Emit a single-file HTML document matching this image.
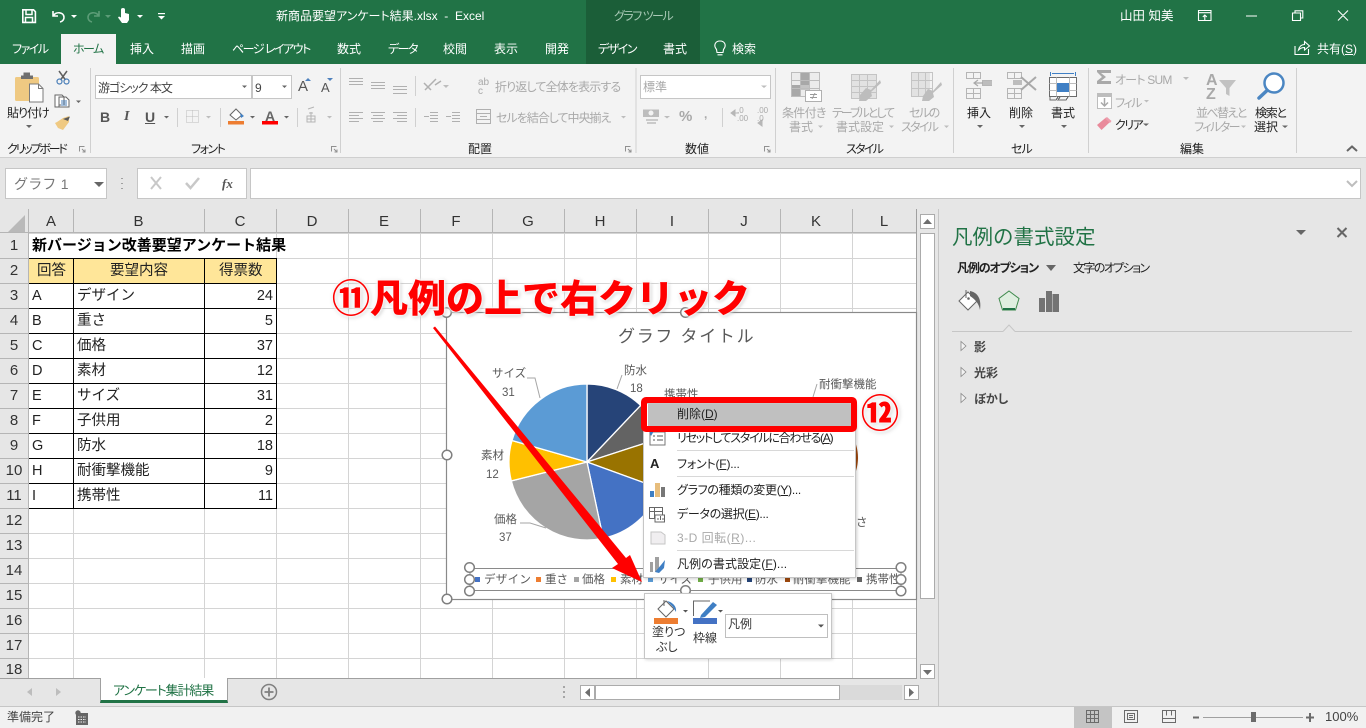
<!DOCTYPE html>
<html lang="ja"><head><meta charset="utf-8"><title>Excel</title>
<style>
html,body{margin:0;padding:0}
body{width:1366px;height:728px;overflow:hidden;position:relative;background:#fff;font-family:"Liberation Sans","Noto Sans CJK JP",sans-serif;color:#333}
.b{position:absolute;box-sizing:border-box}
.t{position:absolute;white-space:nowrap;line-height:16px;font-size:12px;font-feature-settings:"palt";color:#333;margin-top:1px}
.w{color:#fff}.g{color:#a9a9a9}.k{color:#222}
.n{letter-spacing:-1.5px}
.c{position:absolute;white-space:nowrap;line-height:20px;font-size:14.5px;color:#222;margin-top:1px}
.r{text-align:right;width:60px}
.h{position:absolute;white-space:nowrap;line-height:20px;font-size:15px;color:#333;text-align:center;margin-top:1px}
.l{position:absolute;white-space:nowrap;line-height:16px;font-size:11.5px;color:#595959;margin-top:1px}
svg{position:absolute;left:0;top:0}
</style></head><body>
<!-- backgrounds -->
<div class="b" style="left:0;top:0;width:1366px;height:64px;background:#217346"></div>
<div class="b" style="left:586px;top:0;width:114px;height:64px;background:#1b5e38"></div>
<div class="b" style="left:61px;top:34px;width:55px;height:30px;background:#f3f3f3"></div>
<div class="b" style="left:0;top:64px;width:1366px;height:94px;background:#f3f3f3;border-bottom:1px solid #cfcfcf"></div>
<div class="b" style="left:0;top:158px;width:1366px;height:51px;background:#e6e6e6"></div>
<div class="b" style="left:5px;top:168px;width:102px;height:31px;background:#fff;border:1px solid #c6c6c6"></div>
<div class="b" style="left:137px;top:168px;width:110px;height:31px;background:#fff;border:1px solid #c6c6c6"></div>
<div class="b" style="left:250px;top:168px;width:1111px;height:31px;background:#fff;border:1px solid #c6c6c6"></div>
<div class="b" style="left:0;top:209px;width:917px;height:24px;background:#e6e6e6"></div>
<div class="b" style="left:0;top:233px;width:28px;height:445px;background:#e6e6e6"></div>
<div class="b" style="left:917px;top:209px;width:449px;height:497px;background:#e6e6e6"></div>
<div class="b" style="left:0;top:678px;width:917px;height:28px;background:#e6e6e6"></div>
<div class="b" style="left:0;top:706px;width:1366px;height:22px;background:#f1f1f1;border-top:1px solid #c6c6c6"></div>
<div class="b" style="left:29px;top:258px;width:247px;height:25px;background:#ffe699"></div>
<div class="b" style="left:1074px;top:707px;width:38px;height:21px;background:#c4c4c4"></div>
<div class="b" style="left:95px;top:75px;width:157px;height:24px;background:#fff;border:1px solid #c6c6c6"></div>
<div class="b" style="left:252px;top:75px;width:40px;height:24px;background:#fff;border:1px solid #c6c6c6"></div>
<div class="b" style="left:640px;top:75px;width:131px;height:24px;background:#fff;border:1px solid #c6c6c6"></div>
<!-- scrollbars -->
<div class="b" style="left:920px;top:214px;width:15px;height:15px;background:#fff;border:1px solid #ababab"></div>
<div class="b" style="left:920px;top:233px;width:15px;height:366px;background:#fff;border:1px solid #ababab"></div>
<div class="b" style="left:920px;top:664px;width:15px;height:15px;background:#fff;border:1px solid #ababab"></div>
<div class="b" style="left:595px;top:685px;width:307px;height:15px;background:#dadada"></div>
<div class="b" style="left:580px;top:685px;width:15px;height:15px;background:#fff;border:1px solid #ababab"></div>
<div class="b" style="left:595px;top:685px;width:245px;height:15px;background:#fff;border:1px solid #ababab"></div>
<div class="b" style="left:904px;top:685px;width:15px;height:15px;background:#fff;border:1px solid #ababab"></div>
<div class="b" style="left:100px;top:678px;width:128px;height:25px;background:#fff;border:1px solid #a0a0a0;border-top:0;border-bottom:3px solid #217346"></div>

<svg width="1366" height="728" viewBox="0 0 1366 728" shape-rendering="auto">
<!-- grid -->
<g shape-rendering="crispEdges" fill="none">
<path stroke="#d4d4d4" d="M276.5 233V678M348.5 209V678M420.5 233V678M492.5 233V678M564.5 233V678M636.5 233V678M708.5 233V678M780.5 233V678M852.5 233V678M916.5 233V678M73.5 508V678M204.5 508V678M29 258.5H73M29 533.5H916M29 558.5H916M29 583.5H916M29 608.5H916M29 633.5H916M29 658.5H916M276 258.5H916M276 283.5H916M276 308.5H916M276 333.5H916M276 358.5H916M276 383.5H916M276 408.5H916M276 433.5H916M276 458.5H916M276 483.5H916M276 508.5H916M29 233.5H916"/>
<path stroke="#000" d="M28.5 258V508M73.5 258V508M204.5 258V508M276.5 258V508M29 258.5H277M29 283.5H277M29 308.5H277M29 333.5H277M29 358.5H277M29 383.5H277M29 408.5H277M29 433.5H277M29 458.5H277M29 483.5H277M29 508.5H277"/>
<path stroke="#b5b5b5" d="M28.5 209V678M73.5 209V233M204.5 209V233M276.5 209V233M348.5 209V233M420.5 209V233M492.5 209V233M564.5 209V233M636.5 209V233M708.5 209V233M780.5 209V233M852.5 209V233M0 232.5H917M0 258.5H28M0 283.5H28M0 308.5H28M0 333.5H28M0 358.5H28M0 383.5H28M0 408.5H28M0 433.5H28M0 458.5H28M0 483.5H28M0 508.5H28M0 533.5H28M0 558.5H28M0 583.5H28M0 608.5H28M0 633.5H28M0 658.5H28"/>
<path stroke="#a0a0a0" d="M0 678.5H100M228 678.5H917M916.5 209V679"/>
<path stroke="#c6c6c6" d="M938.5 209V706"/>
<path stroke="#d0d0d0" d="M90.5 68V153M340.5 68V153M636 68V153M775.5 68V153M953.5 68V153M1088.5 68V153M1296.5 68V153M177.5 108V127M220.5 108V127M297.5 108V127M415.5 76V96M415.5 108V127M722.5 108V127"/>
</g>
<path d="M8 232L25 215V232Z" fill="#b9b9b9"/>
<!-- title-bar icons -->
<g fill="none" stroke="#fff" stroke-width="1.6">
<path d="M22.8 9.8H33.5L35.4 11.7V22.4H22.8Z"/><path d="M26 10V14.5H32V10M25.5 22V17.5H32.5V22" stroke-width="1.5"/>
<path d="M53 11V16H58M53.5 15.5C56 11.5 63.5 11.8 64 17C64.2 19.5 62.5 21.5 60 22"/>
<path d="M99 11V16H94M98.5 15.5C96 11.5 88.5 11.8 88 17C87.8 19.5 89.5 21.5 92 22" stroke="#5c9c77"/>
</g>
<path d="M121 9.5C121 7.5 125 7.5 125 9.5V13L129 14V20L127 23H122L118 17.5L119 16.5L121 17.5Z" fill="#fff"/>
<g fill="#fff"><path d="M71 15H77L74 18Z"/><path d="M105 15H111L108 18Z" fill="#5c9c77"/><path d="M137 15H143L140 18Z"/><path d="M158 16H165L161.5 19.5Z"/><rect x="158" y="13" width="7" height="1.2"/></g>
<g fill="none" stroke="#fff" stroke-width="1.1">
<path d="M1198.5 10.5H1211V20.5H1198.5ZM1198.5 12.7H1211M1204.8 20V15M1202.8 17L1204.8 15L1206.8 17"/>
<path d="M1246 16H1257M1292.5 13H1300.5V20.5H1292.5ZM1295 13V10.8H1302.8V18H1300.5M1338 10.5L1348 20.5M1348 10.5L1338 20.5"/>
<path d="M716.5 49.5C713 45 715.5 41 720 41C724.5 41 727 45 723.5 49.5L723 52.5H717ZM717.5 54.8H722.5"/>
<path d="M1295 46V54.5H1308.5V49M1298.5 50C1299.5 46 1302 44.5 1304.5 44.5V41.5L1309.5 46L1304.5 50V47.5C1302 47.5 1300 48.5 1298.5 50Z"/>
</g>
<!-- clipboard -->
<rect x="15" y="77" width="24" height="24" rx="1.5" fill="#efc982"/>
<path d="M21 75.5H23.5V72.5H30V75.5H33V79H21Z" fill="#6f6f6f"/>
<path d="M29.5 84H38.5L43 88.5V102H29.5Z" fill="#fff" stroke="#7b7b7b"/>
<path d="M38.5 84V88.5H43" fill="none" stroke="#7b7b7b"/>
<g fill="none" stroke="#5f5f5f" stroke-width="1.5"><path d="M59 71L65.5 80M67 71L60.5 80"/></g>
<circle cx="59.5" cy="81.5" r="2.5" fill="none" stroke="#4b7fb8" stroke-width="1.2"/><circle cx="66.5" cy="81.5" r="2.5" fill="none" stroke="#4b7fb8" stroke-width="1.2"/>
<path d="M55 95H62L64 97V105H59V107H55ZM59 97H66L69 100V107H59Z" fill="#fff" stroke="#666"/>
<path d="M61 101H67M61 103H67M61 105H67" stroke="#4b7fb8"/>
<path d="M57 122L63 118L69 116V122L63 130L58 128L55 123Z" fill="#efc982"/><path d="M63 119L70 116.5L68 121" fill="#5a5a5a"/>
<!-- small down arrows -->
<g fill="#666">
<path d="M26 125H32L29 128Z"/><path d="M76 100.5H81L78.5 103Z"/><path d="M242 85.5H247L244.5 88Z"/><path d="M282 85.5H287L284.5 88Z"/><path d="M164 116H169L166.5 118.5Z"/><path d="M250 116H255L252.5 118.5Z"/><path d="M284 116H289L286.5 118.5Z"/>
<path d="M977 125H983L980 128Z"/><path d="M1019 125H1025L1022 128Z"/><path d="M1061 125H1067L1064 128Z"/><path d="M1143 123.5H1149L1146 126Z"/><path d="M1282 125.5H1288L1285 128Z"/>
<path d="M94 182H104L99 187Z"/><path d="M1296 230H1306L1301 235Z"/><path d="M1046 265H1056L1051 271Z"/>
</g>
<g fill="#bdbdbd"><path d="M206 116H211L208.5 118.5Z"/><path d="M327 116H332L329.5 118.5Z"/><path d="M443 85H449L446 88Z"/><path d="M621 116H626L623.5 118.5Z"/><path d="M761 85.5H767L764 88Z"/><path d="M664 116H670L667 118.5Z"/><path d="M1183 77H1189L1186 80Z"/><path d="M1144 100H1149L1146.5 102.5Z"/><path d="M1241 125.5H1246L1243.5 128Z"/><path d="M944 125.5H949L946.5 128Z"/><path d="M818 125.5H823L820.5 128Z"/><path d="M889 125.5H894L891.5 128Z"/><path d="M1347 181L1352 186L1357 181" fill="none" stroke="#bdbdbd" stroke-width="2"/></g>
<!-- font-row icons -->
<rect x="228" y="121" width="16" height="3.5" fill="#ed7d31"/><rect x="262" y="121" width="16" height="3.5" fill="#f00"/>
<path d="M230 115L236 109L242 115L236 120Z" fill="#fff" stroke="#666"/><path d="M240 113L244 116L241 118Z" fill="#3f7fc4"/>
<path d="M186.5 110.5H198.5V122.5H186.5ZM192.5 110.5V122.5M186.5 116.5H198.5" fill="none" stroke="#bdbdbd" stroke-dasharray="1 1"/>
<path d="M308 109L314 107M309 113H313M307 116H315V122H307ZM311 112V122M307 119H315" fill="none" stroke="#b5b5b5"/>
<path d="M305 81L308 78L311 81Z" fill="#4f81bd"/><path d="M327 78L330 81L333 78Z" fill="#4f81bd"/>
<!-- alignment -->
<path shape-rendering="crispEdges" fill="none" stroke="#b0b0b0" d="M349 78.5H363M349 81.5H363M349 84.5H363M371 82.5H385M371 85.5H385M371 88.5H385M393 86.5H407M393 89.5H407M393 93.5H407M349 112.5H363M349 115.5H359M349 118.5H363M349 121.5H359M371 112.5H385M373 115.5H383M371 118.5H385M373 121.5H383M393 112.5H407M397 115.5H407M393 118.5H407M397 121.5H407M430 112.5H438M430 115.5H438M430 118.5H438M430 121.5H438M424 116.5H429M452 112.5H460M452 115.5H460M452 118.5H460M452 121.5H460M446 116.5H451M476.5 109.5H490.5V123.5H476.5ZM476.5 113.5H490.5M476.5 119.5H490.5M480 116.5H487"/>
<path d="M425 90L436 79M424 83L431 90M435 85L441 81" fill="none" stroke="#b0b0b0" stroke-width="1.5"/>
<text x="478" y="85" font-size="10" fill="#a9a9a9" font-family="Liberation Sans">ab</text><text x="478" y="94" font-size="10" fill="#a9a9a9" font-family="Liberation Sans">c</text>
<path d="M643 109.5H659V117H643Z" fill="#bdbdbd"/><circle cx="651" cy="113" r="2.5" fill="#f3f3f3"/><path d="M646 120H658M647 123H656" stroke="#bdbdbd" stroke-width="1.5"/>
<path d="M731 113L735 110V116ZM735 113H739M758 123L762 120V126Z" fill="#b0b0b0" stroke="#b0b0b0" opacity=".9"/>
<!-- styles icons -->
<g shape-rendering="crispEdges">
<path fill="#ececec" d="M792 73H819V96H792Z"/><path fill="#a8a8a8" d="M800 73H810V85H800ZM792 85H800V97H792Z"/><path fill="#c4c4c4" d="M800 85H810V90H800Z"/>
<path fill="none" stroke="#bdbdbd" d="M791.5 72.5H819.5V96.5H791.5ZM800.5 72.5V96.5M809.5 72.5V96.5M791.5 80.5H819.5M791.5 88.5H819.5"/>
<path fill="#fff" stroke="#b0b0b0" d="M805.5 90.5H821.5V101.5H805.5Z"/>
<path fill="none" stroke="#9a9a9a" d="M810 94.5H817M810 97.5H817M815 93L812 99"/>
<path fill="#e2e2e2" d="M851 75H876V98H851Z"/><path fill="none" stroke="#c4c4c4" d="M851.5 74.5H876.5V98.5H851.5ZM851.5 80.5H876.5M851.5 86.5H876.5M851.5 92.5H876.5M859.5 74.5V98.5M867.5 74.5V98.5"/>
<path fill="#e2e2e2" d="M911 73H930V96H911Z"/><path fill="none" stroke="#c4c4c4" d="M911.5 72.5H932.5V96.5H911.5ZM911.5 80.5H932.5M911.5 88.5H932.5M918.5 72.5V96.5M925.5 72.5V96.5"/>
<!-- cells icons -->
<path fill="none" stroke="#b5b5b5" d="M966.5 72.5H980.5V78.5H966.5ZM973.5 72.5V78.5M966.5 88.5H980.5V98.5H966.5ZM966.5 93.5H980.5M973.5 88.5V98.5M982.5 80.5H991.5V85.5H982.5ZM987.5 80.5V85.5M1007.5 72.5H1021.5V78.5H1007.5ZM1014.5 72.5V78.5M1007.5 88.5H1021.5V98.5H1007.5ZM1007.5 93.5H1021.5M1014.5 88.5V98.5"/>
<path fill="#bdbdbd" d="M983 81H992V85H983ZM1013 80H1022V85H1013Z"/>
<path fill="#fff" stroke="#6b6b6b" d="M1049.5 77.5H1076.5V96.5H1049.5Z"/>
<path fill="none" stroke="#bdbdbd" d="M1049.5 83.5H1076.5M1049.5 90.5H1076.5M1056.5 77.5V96.5M1069.5 77.5V96.5"/>
<path fill="#3f7fc4" d="M1057 83H1069V92H1057Z"/>
<path fill="none" stroke="#3f7fc4" d="M1050.5 72V76M1075.5 72V76M1052 73.5H1074"/>
<path fill="none" stroke="#6b6b6b" d="M1050 97V100H1056L1058 97M1060 97L1058 100H1066L1068 97"/>
</g>
<path d="M880 80L871 90L866 88L860 95L859 101H866L872 96L871 92L881 83Z" fill="#bdbdbd"/>
<path d="M941 82L933 91L928 89L923 96L922 101H929L934 97L933 93L942 85Z" fill="#bdbdbd"/>
<path d="M983 83H974M978 80L974 83L978 86" fill="none" stroke="#a9a9a9" stroke-width="1.2"/>
<path d="M1021 77L1036 90M1036 77L1021 90" fill="none" stroke="#a9a9a9" stroke-width="2"/>
<path d="M1097 70H1111V73H1101L1106 77L1101 81H1111V84H1097V81L1102 77L1097 72Z" fill="#a9a9a9"/>
<path d="M1097.5 93.5H1111.5V108.5H1097.5Z" fill="#fff" stroke="#bdbdbd"/><path d="M1097.5 93.5H1111.5V97H1097.5Z" fill="#bdbdbd"/><path d="M1104.5 98V106M1101 102.5L1104.5 106L1108 102.5" fill="none" stroke="#a9a9a9" stroke-width="1.5"/>
<path d="M1097 125L1106 117.5L1110.5 121.5L1101.5 130Z" fill="#e98a9b"/><path d="M1105 118.5L1107 117L1111.5 121L1110 123Z" fill="#ec9cab"/>
<!-- sort / search -->
<text x="1206" y="85" font-size="16" font-weight="700" fill="#a9a9a9" font-family="Liberation Sans">A</text><text x="1206" y="99" font-size="16" font-weight="700" fill="#a9a9a9" font-family="Liberation Sans">Z</text>
<path d="M1219 80H1236L1229.5 88V96L1226 94V88Z" fill="#c2c2c2"/>
<circle cx="1274" cy="83" r="9.5" fill="#fff" stroke="#4b86c2" stroke-width="2.5"/><path d="M1267 90.5L1259 98" stroke="#4b86c2" stroke-width="3.5" stroke-linecap="round"/>
<path d="M1347 151L1352 146.5L1357 151" fill="none" stroke="#666" stroke-width="2"/>
<!-- dialog launchers -->
<g fill="none" stroke="#909090"><path d="M79.5 151.5V146.5H84.5M82 149L85 152M85 149.5V152H82.5M331.5 151.5V146.5H336.5M334 149L337 152M337 149.5V152H334.5M625.5 151.5V146.5H630.5M628 149L631 152M631 149.5V152H628.5M764.5 151.5V146.5H769.5M767 149L770 152M770 149.5V152H767.5"/></g>
<!-- formula bar -->
<path d="M151 177L161 189M161 177L151 189" stroke="#c8c8c8" stroke-width="2"/><path d="M186 183L190.5 188L199 178" fill="none" stroke="#c8c8c8" stroke-width="2.5"/>
<path d="M122 178V179M122 183V184M122 188V189" stroke="#a0a0a0" stroke-width="2"/>
<!-- panel icons -->
<path d="M1337.5 228L1346.5 237M1346.5 228L1337.5 237" stroke="#666" stroke-width="2"/>
<path d="M959 301L968 292L977 301L968 310Z" fill="#fff" stroke="#666"/><path d="M966 290V298" stroke="#666"/><circle cx="968.5" cy="298.5" r="1.3" fill="#666"/><path d="M970 291C976 292 982 297 980 310C979 304 976 300 970 296Z" fill="#666"/>
<path d="M1009 291L1019 298.5L1015.5 310H1002.5L999 298.5Z" fill="#dfeee0" stroke="#3f8a4d"/><path d="M1003 309H1015" stroke="#217346" stroke-width="2"/>
<path d="M1039 298H1045V312H1039ZM1046 291H1052V312H1046ZM1052.5 294H1059V312H1052.5Z" fill="#737373"/>
<path shape-rendering="crispEdges" d="M952 331.5H1003M1015 331.5H1352" stroke="#c6c6c6"/>
<path d="M1003 331.5L1009 325L1015 331.5" fill="none" stroke="#c6c6c6"/>
<path d="M961 341.5V350.5L966 346ZM961 367.5V376.5L966 372ZM961 393.5V402.5L966 398Z" fill="#f3f3f3" stroke="#888" stroke-width=".8"/>
<!-- scrollbar arrows -->
<g fill="#6e6e6e"><path d="M923 224H932L927.5 219Z"/><path d="M923 670H932L927.5 675Z"/><path d="M590 688V697L585 692.5Z"/><path d="M909 688V697L914 692.5Z"/></g>
<g fill="#bdbdbd"><path d="M32 688V696L27 692ZM56 688V696L61 692Z"/></g>
<path d="M564 686V688M564 691V693M564 696V698" stroke="#a6a6a6" stroke-width="2"/>
<circle cx="269" cy="692" r="7.5" fill="#e6e6e6" stroke="#808080" stroke-width="1.5"/><path d="M264.5 692H273.5M269 687.5V696.5" stroke="#808080" stroke-width="1.8"/>
<!-- status icons -->
<circle cx="78" cy="713" r="2.7" fill="#666"/><path shape-rendering="crispEdges" d="M76 713H88V725H76Z" fill="#666"/><path shape-rendering="crispEdges" d="M78 717H86M78 719.5H86M78 722H86" stroke="#f1f1f1" stroke-dasharray="1.5 1"/>
<g shape-rendering="crispEdges" fill="none" stroke="#6b6b6b"><path d="M1086.5 710.5H1098.5V722.5H1086.5ZM1090.5 710.5V722.5M1094.5 710.5V722.5M1086.5 714.5H1098.5M1086.5 718.5H1098.5M1124.5 710.5H1137.5V722.5H1124.5ZM1127.5 713.5H1134.5V719.5H1127.5ZM1129 715.5H1133M1129 717.5H1133M1162.5 710.5H1175.5V722.5H1162.5ZM1162.5 718.5H1175.5M1166.5 710.5V715.5M1171.5 710.5V715.5"/><path d="M1203 717.5H1303" stroke="#a0a0a0"/><path d="M1193 717.5H1199M1306 717.5H1314M1310 713V722" stroke="#6b6b6b" stroke-width="2"/></g>
<rect x="1251" y="712" width="5" height="10" fill="#6b6b6b"/>
<!-- chart -->
<rect x="446.5" y="312.5" width="470" height="287" fill="#fff" stroke="#8a8a8a" stroke-width="1.2"/>
<path d="M850 431Q866 458 850 484Z" fill="#9e480e"/>
<g stroke="#fff" stroke-width="1.3">
<path d="M587 462L587 384A78 78 0 0 1 640.7 405.4Z" fill="#264478"/>
<path d="M587 462L640.7 405.4A78 78 0 0 1 661.2 437.9Z" fill="#636363"/>
<path d="M587 462L661.2 437.9A78 78 0 0 1 660.3 488.7Z" fill="#997300"/>
<path d="M587 462L660.3 488.7A78 78 0 0 1 603.2 538.3Z" fill="#4472c4"/>
<path d="M587 462L603.2 538.3A78 78 0 0 1 511.3 480.9Z" fill="#a5a5a5"/>
<path d="M587 462L511.3 480.9A78 78 0 0 1 512 440.5Z" fill="#ffc000"/>
<path d="M587 462L512 440.5A78 78 0 0 1 587 384Z" fill="#5b9bd5"/>
</g>
<g fill="none" stroke="#a6a6a6"><path d="M527 378H535L540 398M622 375L617 389M817 384L813 397M520 523L530 523L546 528"/></g>
<!-- legend box -->
<rect x="470" y="568.5" width="431" height="22" fill="none" stroke="#8a8a8a"/>
<g shape-rendering="crispEdges">
<rect x="475" y="577" width="5" height="5" fill="#4472c4"/><rect x="536" y="577" width="5" height="5" fill="#ed7d31"/><rect x="574" y="577" width="5" height="5" fill="#a5a5a5"/><rect x="611" y="577" width="5" height="5" fill="#ffc000"/><rect x="648" y="577" width="5" height="5" fill="#5b9bd5"/><rect x="698" y="577" width="5" height="5" fill="#70ad47"/><rect x="747" y="577" width="5" height="5" fill="#264478"/><rect x="785" y="577" width="5" height="5" fill="#9e480e"/><rect x="857" y="577" width="5" height="5" fill="#636363"/>
</g>
</svg>

<!-- chart text -->
<div class="t" style="left:618px;top:326px;font-size:17px;line-height:20px;color:#595959;letter-spacing:1.7px;font-feature-settings:normal">グラフ タイトル</div>
<div class="l" style="left:492px;top:365px">サイズ</div><div class="l" style="left:502px;top:384px">31</div>
<div class="l" style="left:624px;top:362px">防水</div><div class="l" style="left:630px;top:380px">18</div>
<div class="l" style="left:664px;top:386px">携帯性</div>
<div class="l" style="left:819px;top:376px">耐衝撃機能</div>
<div class="l" style="left:481px;top:447px">素材</div><div class="l" style="left:486px;top:466px">12</div>
<div class="l" style="left:494px;top:511px">価格</div><div class="l" style="left:499px;top:529px">37</div>
<div class="l" style="left:856px;top:514px">さ</div>
<div class="l" style="left:484px;top:571px;letter-spacing:.3px">デザイン</div><div class="l" style="left:545px;top:571px">重さ</div><div class="l" style="left:582px;top:571px">価格</div><div class="l" style="left:620px;top:571px">素材</div><div class="l" style="left:658px;top:571px">サイズ</div><div class="l" style="left:708px;top:571px">子供用</div><div class="l" style="left:755px;top:571px">防水</div><div class="l" style="left:793px;top:571px">耐衝撃機能</div><div class="l" style="left:866px;top:571px">携帯性</div>

<!-- handles -->
<svg width="1366" height="728" viewBox="0 0 1366 728"><g fill="#fff" stroke="#7f7f7f" stroke-width="1.5">
<circle cx="446.5" cy="312.5" r="4.8"/><circle cx="685.5" cy="312.5" r="4.8"/><circle cx="447" cy="455" r="4.8"/><circle cx="447" cy="599" r="4.8"/>
<circle cx="469.5" cy="567.5" r="4.8"/><circle cx="469.5" cy="579.5" r="4.8"/><circle cx="469.5" cy="591" r="4.8"/><circle cx="901" cy="567.5" r="4.8"/><circle cx="901" cy="579.5" r="4.8"/><circle cx="901" cy="591" r="4.8"/><circle cx="685.5" cy="590.5" r="4.8"/>
</g></svg>

<!-- ARROW -->
<svg width="1366" height="728" viewBox="0 0 1366 728"><path d="M433 328L435 326.5L626 558L630 555L642 582L612 568L618 564Z" fill="#f00"/></svg>

<!-- mini toolbar -->
<div class="b" style="left:644px;top:593px;width:188px;height:66px;background:#fff;border:1px solid #c6c6c6;box-shadow:1px 1px 3px rgba(0,0,0,.15)"></div>
<div class="b" style="left:725px;top:614px;width:103px;height:24px;background:#fff;border:1px solid #bfbfbf"></div>
<svg width="1366" height="728" viewBox="0 0 1366 728">
<rect x="654" y="618" width="24" height="6" fill="#ed7d31"/><rect x="693" y="618" width="24" height="6" fill="#4472c4"/>
<path d="M658 609L666 601L674 609L666 617Z" fill="#fff" stroke="#666"/><path d="M667 601C672 602 677 606 676 612L673 607Z" fill="#3f7fc4"/><path d="M664 600V606" stroke="#666"/>
<path d="M693.5 616V601H710" fill="none" stroke="#666"/><path d="M701 615L713 602L717 605L705 617L700 618Z" fill="#3f7fc4"/>
<path d="M818 624.5H824L821 627.5Z M683 610H688L685.5 612.5Z M718 610H723L720.5 612.5Z" fill="#555"/>
</svg>
<div class="t" style="left:652px;top:623px">塗りつ</div><div class="t" style="left:656px;top:638px">ぶし</div><div class="t" style="left:693px;top:629px">枠線</div><div class="t" style="left:728px;top:615px">凡例</div>

<!-- context menu -->
<div class="b" style="left:643px;top:403px;width:213px;height:175px;background:#fff;border:1px solid #c6c6c6;box-shadow:1px 1px 3px rgba(0,0,0,.2)"></div>
<div class="b" style="left:648px;top:404px;width:203px;height:22px;background:#c0c0c0"></div>
<svg width="1366" height="728" viewBox="0 0 1366 728">
<path shape-rendering="crispEdges" d="M677 450.5H854M677 476.5H854M677 550.5H854" stroke="#d8d8d8"/>
<path d="M650 432H665V445H650Z" fill="#fff" stroke="#777"/><path d="M653 436H655M653 440H655M657 436H663M657 440H663" stroke="#555"/><path d="M649 431L654 431L651 436Z" fill="#3f7fc4"/>
<path d="M650 491H654V497H650ZM655 483H660V497H655ZM661 487H665V497H661Z" fill="#777"/><path d="M655 483H660V497H655Z" fill="#e7bd7c"/><path d="M650 491H654V497H650Z" fill="#3f7fc4"/>
<path d="M649.5 507.5H662.5V518.5H649.5ZM649.5 511.5H662.5M654.5 507.5V518.5" fill="none" stroke="#666"/><path d="M655 515H664.5V522H655Z" fill="#fff" stroke="#666"/><path d="M658 520V518M660.5 520V516M663 520V518" stroke="#666"/>
<path d="M651 532H661L665 535V544H651Z" fill="#f0eef0" stroke="#c6c6c6"/>
<path d="M650 562H653V572H650ZM655 557H659V572H655Z" fill="#a0a0a0"/><path d="M655 572L661 565L665 560L664 568L659 573Z" fill="#3f7fc4"/>
</svg>
<div class="t k" style="left:677px;top:405px">削除(<u>D</u>)</div>
<div class="t k" style="left:677px;top:429px;letter-spacing:-1.25px">リセットしてスタイルに合わせる(<u>A</u>)</div>
<div class="t k" style="left:650px;top:455px;font-weight:700;font-size:13px;font-family:'Liberation Sans'">A</div>
<div class="t k" style="left:677px;top:455px;letter-spacing:-.2px">フォント(<u>F</u>)...</div>
<div class="t k" style="left:677px;top:481px;letter-spacing:-.3px">グラフの種類の変更(<u>Y</u>)...</div>
<div class="t k" style="left:677px;top:505px;letter-spacing:-.3px">データの選択(<u>E</u>)...</div>
<div class="t g" style="left:677px;top:529px;letter-spacing:.5px">3-D 回転(<u>R</u>)...</div>
<div class="t k" style="left:677px;top:555px;letter-spacing:.1px">凡例の書式設定(<u>F</u>)...</div>
<div class="b" style="left:641px;top:397px;width:216px;height:35px;border:6px solid #f00;border-radius:5px"></div>

<!-- big annotation -->
<div class="t" style="left:332px;top:277px;line-height:44px;font-size:38px;font-weight:900;color:#f00;font-feature-settings:normal;text-shadow:0 0 3px #fff,0 0 3px #fff,0 0 4px #fff,1px 1px 4px rgba(0,0,0,.35)">⑪凡例の上で右クリック</div>
<div class="t" style="left:861px;top:392px;line-height:44px;font-size:38px;font-weight:900;color:#f00;font-feature-settings:normal;text-shadow:0 0 3px #fff,0 0 3px #fff,0 0 4px #fff,1px 1px 4px rgba(0,0,0,.35)">⑫</div>

<!-- title text -->
<div class="t w" style="left:276px;top:8px;font-size:12px;margin:0">新商品要望アンケート結果.xlsx&nbsp; -&nbsp; Excel</div>
<div class="t n" style="left:614px;top:8px;color:#a9c9b6;margin:0">グラフ ツール</div>
<div class="t w" style="left:1120px;top:8px;font-size:12.5px;font-feature-settings:normal;margin:0">山田 知美</div>
<!-- tabs -->
<div class="t w n" style="left:12px;top:40px">ファイル</div>
<div class="t n" style="left:73px;top:40px;color:#217346">ホーム</div>
<div class="t w" style="left:130px;top:40px">挿入</div>
<div class="t w" style="left:181px;top:40px">描画</div>
<div class="t w n" style="left:232px;top:40px">ページ レイアウト</div>
<div class="t w" style="left:337px;top:40px">数式</div>
<div class="t w n" style="left:388px;top:40px">データ</div>
<div class="t w" style="left:443px;top:40px">校閲</div>
<div class="t w" style="left:494px;top:40px">表示</div>
<div class="t w" style="left:545px;top:40px">開発</div>
<div class="t w n" style="left:598px;top:40px">デザイン</div>
<div class="t w" style="left:663px;top:40px">書式</div>
<div class="t w" style="left:732px;top:40px">検索</div>
<div class="t w" style="left:1317px;top:40px">共有(<u>S</u>)</div>
<!-- ribbon text -->
<div class="t k" style="left:7px;top:104px;letter-spacing:-1px">貼り付け</div>
<div class="t k" style="left:7px;top:140px;letter-spacing:-2.2px">クリップボード</div>
<div class="t k n" style="left:191px;top:140px">フォント</div>
<div class="t k" style="left:468px;top:140px">配置</div>
<div class="t k" style="left:685px;top:140px">数値</div>
<div class="t k" style="left:846px;top:140px;letter-spacing:-1.7px">スタイル</div>
<div class="t k" style="left:1011px;top:140px;letter-spacing:-1px">セル</div>
<div class="t k" style="left:1180px;top:140px">編集</div>
<div class="t" style="left:98px;top:79px;font-size:12px;color:#444;letter-spacing:-1px">游ゴシック 本文</div>
<div class="t" style="left:255px;top:79px;color:#444">9</div>
<div class="t" style="left:298px;top:78px;font-size:15px;font-family:'Liberation Sans';color:#555">A</div>
<div class="t" style="left:321px;top:79px;font-size:13px;font-family:'Liberation Sans';color:#555">A</div>
<div class="t" style="left:100px;top:108px;font-size:14px;font-weight:700;font-family:'Liberation Sans';color:#555">B</div>
<div class="t" style="left:124px;top:108px;font-size:14px;font-style:italic;font-weight:700;font-family:'Liberation Serif';color:#555">I</div>
<div class="t" style="left:145px;top:108px;font-size:14px;font-weight:700;font-family:'Liberation Sans';color:#555"><u>U</u></div>
<div class="t" style="left:265px;top:107px;font-weight:700;font-size:14px;font-family:'Liberation Sans';color:#666">A</div>
<div class="t g" style="left:495px;top:78px;letter-spacing:-.85px">折り返して全体を表示する</div>
<div class="t g" style="left:496px;top:109px;letter-spacing:-1px">セルを結合して中央揃え</div>
<div class="t g" style="left:643px;top:78px">標準</div>
<div class="t g" style="left:679px;top:108px;font-size:15px;font-family:'Liberation Sans';font-weight:700">%</div>
<div class="t g" style="left:704px;top:105px;font-weight:700;font-family:'Liberation Sans'">,</div>
<div class="t g" style="left:737px;top:106px;font-size:8px;line-height:8px">.0<br>.00</div>
<div class="t g" style="left:757px;top:106px;font-size:8px;line-height:8px">.00<br>.0</div>
<div class="t g" style="left:782px;top:104px;letter-spacing:-.7px">条件付き</div><div class="t g" style="left:789px;top:118px">書式</div>
<div class="t g" style="left:832px;top:104px;letter-spacing:-2px">テーブルとして</div><div class="t g" style="left:836px;top:118px">書式設定</div>
<div class="t g" style="left:909px;top:104px;letter-spacing:-1.5px">セルの</div><div class="t g" style="left:901px;top:118px;letter-spacing:-1.7px">スタイル</div>
<div class="t k" style="left:967px;top:104px">挿入</div><div class="t k" style="left:1009px;top:104px">削除</div><div class="t k" style="left:1051px;top:104px">書式</div>
<div class="t g" style="left:1115px;top:71px;letter-spacing:-.8px">オート SUM</div><div class="t g n" style="left:1115px;top:94px">フィル</div>
<div class="t k n" style="left:1115px;top:116px">クリア</div>
<div class="t g" style="left:1196px;top:104px;letter-spacing:-1.6px">並べ替えと</div><div class="t g n" style="left:1194px;top:118px">フィルター</div>
<div class="t k" style="left:1255px;top:104px;letter-spacing:-1.3px">検索と</div><div class="t k" style="left:1254px;top:118px">選択</div>
<div class="t" style="left:14px;top:173px;font-size:14px;line-height:20px;color:#777;letter-spacing:.2px;font-feature-settings:normal">グラフ 1</div>
<div class="t" style="left:222px;top:175px;font-size:13px;font-style:italic;font-weight:700;font-family:'Liberation Serif';color:#555">fx</div>
<!-- column headers -->
<div class="h" style="left:29px;top:211px;width:44px">A</div><div class="h" style="left:73px;top:211px;width:131px">B</div><div class="h" style="left:204px;top:211px;width:72px">C</div><div class="h" style="left:276px;top:211px;width:72px">D</div><div class="h" style="left:348px;top:211px;width:72px">E</div><div class="h" style="left:420px;top:211px;width:72px">F</div><div class="h" style="left:492px;top:211px;width:72px">G</div><div class="h" style="left:564px;top:211px;width:72px">H</div><div class="h" style="left:636px;top:211px;width:72px">I</div><div class="h" style="left:708px;top:211px;width:72px">J</div><div class="h" style="left:780px;top:211px;width:72px">K</div><div class="h" style="left:852px;top:211px;width:64px">L</div>
<!-- row headers -->
<div class="h" style="left:0;top:235px;width:28px">1</div><div class="h" style="left:0;top:260px;width:28px">2</div><div class="h" style="left:0;top:285px;width:28px">3</div><div class="h" style="left:0;top:310px;width:28px">4</div><div class="h" style="left:0;top:335px;width:28px">5</div><div class="h" style="left:0;top:360px;width:28px">6</div><div class="h" style="left:0;top:385px;width:28px">7</div><div class="h" style="left:0;top:410px;width:28px">8</div><div class="h" style="left:0;top:435px;width:28px">9</div><div class="h" style="left:0;top:460px;width:28px">10</div><div class="h" style="left:0;top:485px;width:28px">11</div><div class="h" style="left:0;top:510px;width:28px">12</div><div class="h" style="left:0;top:535px;width:28px">13</div><div class="h" style="left:0;top:560px;width:28px">14</div><div class="h" style="left:0;top:585px;width:28px">15</div><div class="h" style="left:0;top:610px;width:28px">16</div><div class="h" style="left:0;top:635px;width:28px">17</div><div class="h" style="left:0;top:659px;width:28px">18</div>
<!-- cells -->
<div class="c" style="left:32px;top:235px;font-size:15px;font-weight:700;color:#000">新バージョン改善要望アンケート結果</div>
<div class="c" style="left:37px;top:260px">回答</div><div class="c" style="left:110px;top:260px">要望内容</div><div class="c" style="left:219px;top:260px">得票数</div>
<div class="c" style="left:32px;top:285px">A</div><div class="c" style="left:77px;top:285px">デザイン</div><div class="c r" style="left:213px;top:285px">24</div>
<div class="c" style="left:32px;top:310px">B</div><div class="c" style="left:77px;top:310px">重さ</div><div class="c r" style="left:213px;top:310px">5</div>
<div class="c" style="left:32px;top:335px">C</div><div class="c" style="left:77px;top:335px">価格</div><div class="c r" style="left:213px;top:335px">37</div>
<div class="c" style="left:32px;top:360px">D</div><div class="c" style="left:77px;top:360px">素材</div><div class="c r" style="left:213px;top:360px">12</div>
<div class="c" style="left:32px;top:385px">E</div><div class="c" style="left:77px;top:385px">サイズ</div><div class="c r" style="left:213px;top:385px">31</div>
<div class="c" style="left:32px;top:410px">F</div><div class="c" style="left:77px;top:410px">子供用</div><div class="c r" style="left:213px;top:410px">2</div>
<div class="c" style="left:32px;top:435px">G</div><div class="c" style="left:77px;top:435px">防水</div><div class="c r" style="left:213px;top:435px">18</div>
<div class="c" style="left:32px;top:460px">H</div><div class="c" style="left:77px;top:460px">耐衝撃機能</div><div class="c r" style="left:213px;top:460px">9</div>
<div class="c" style="left:32px;top:485px">I</div><div class="c" style="left:77px;top:485px">携帯性</div><div class="c r" style="left:213px;top:485px">11</div>
<!-- task pane -->
<div class="t" style="left:952px;top:225px;font-size:20.5px;line-height:24px;color:#217346;font-feature-settings:normal">凡例の書式設定</div>
<div class="t k" style="left:957px;top:259px;font-weight:700;letter-spacing:-1.15px">凡例のオプション</div>
<div class="t k" style="left:1073px;top:259px;letter-spacing:-1.6px">文字のオプション</div>
<div class="t" style="left:974px;top:338px;font-weight:700;color:#444">影</div>
<div class="t" style="left:974px;top:364px;font-weight:700;color:#444">光彩</div>
<div class="t" style="left:974px;top:390px;font-weight:700;color:#444">ぼかし</div>
<!-- sheet tab + status -->
<div class="t" style="left:113px;top:682px;font-size:13px;color:#217346;letter-spacing:-1.1px">アンケート集計結果</div>
<div class="t" style="left:7px;top:708px;font-size:12px;font-feature-settings:normal;color:#444">準備完了</div>
<div class="t" style="left:1325px;top:708px;font-size:13px;color:#444">100%</div>
</body></html>
